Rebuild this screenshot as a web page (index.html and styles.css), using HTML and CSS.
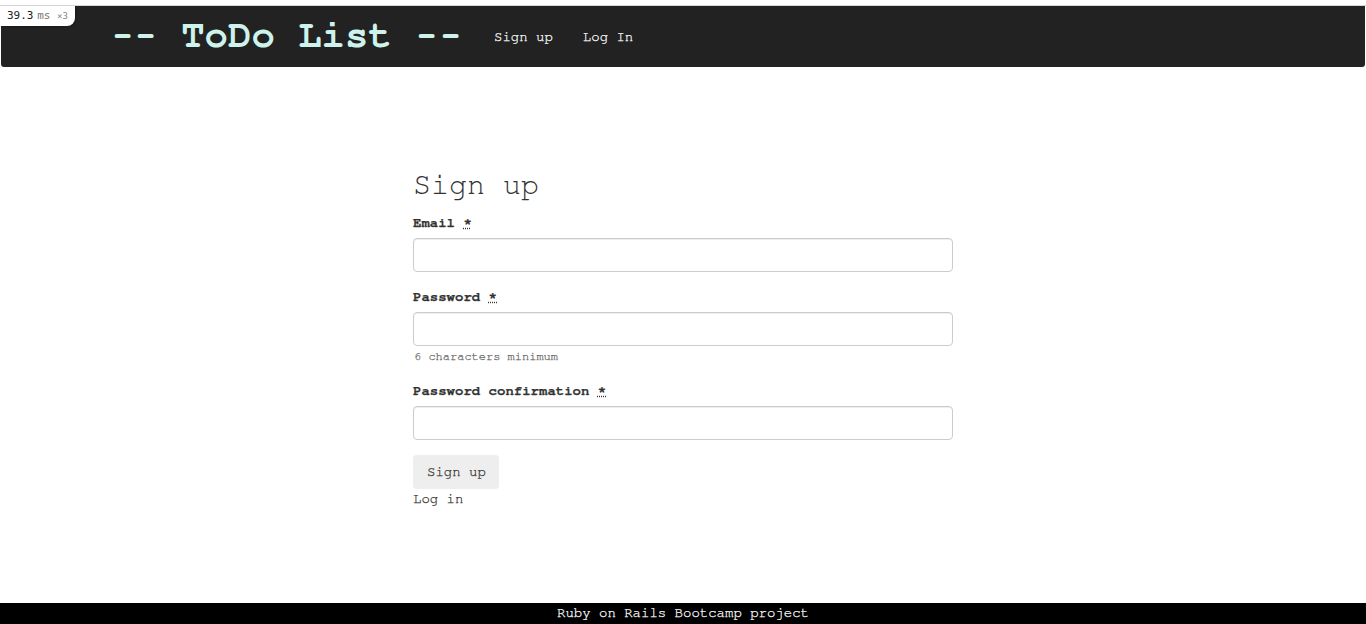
FILE: index.html
```html
<!DOCTYPE html>
<html lang="en">
<head>
    <meta charset="UTF-8">
    <meta name="viewport" content="width=device-width, initial-scale=1.0">
    <title>ToDo List</title>
    <link rel="stylesheet" href="styles.css">
</head>
<body>
    <div class="page">
        <div class="topline">
            <div class="profiler"><span class="ms-value">39.3</span> <span class="ms-unit">ms</span> <span class="ms-count">&times;3</span></div>
            <nav class="navbar">
                <a class="brand" href="#"><span class="dash">-</span><span class="dash">-</span> ToDo List <span class="dash">-</span><span class="dash">-</span></a>
                <a class="nav-link" href="#">Sign up</a>
                <a class="nav-link" href="#">Log In</a>
            </nav>
        </div>

        <main class="main">
            <form class="signup">
                <h2>Sign up</h2>

                <div class="field">
                    <label for="email">Email <abbr title="required">*</abbr></label>
                    <input type="email" id="email" name="email">
                </div>

                <div class="field">
                    <label for="password">Password <abbr title="required">*</abbr></label>
                    <input type="password" id="password" name="password">
                    <p class="hint">6 characters minimum</p>
                </div>

                <div class="field">
                    <label for="confirm">Password confirmation <abbr title="required">*</abbr></label>
                    <input type="password" id="confirm" name="confirm">
                </div>

                <button type="submit">Sign up</button>
                <a class="login" href="#">Log in</a>
            </form>
        </main>

        <footer class="footer">Ruby on Rails Bootcamp project</footer>
    </div>
</body>
</html>
```

FILE: styles.css
```css
* {
    box-sizing: border-box;
}
body {
    margin: 0;
    font-family: "Nimbus Mono PS", "Nimbus Mono L", "FreeMono", "Liberation Mono", "Courier New", monospace;
    font-size: 14px;
    line-height: 20px;
    color: #333;
    background-color: #fff;
    -webkit-text-stroke: 0.25px;
}
.page {
    min-height: 100vh;
    display: flex;
    flex-direction: column;
    padding-top: 5px;
}
.topline {
    position: relative;
    border-top: 1px solid #d6d6d6;
}
.profiler {
    position: absolute;
    top: 0;
    left: 0;
    width: 75px;
    height: 20px;
    padding: 3px 0 0 7px;
    background-color: #fff;
    border-bottom-right-radius: 8px;
    box-shadow: 1px 1px 2px rgba(0, 0, 0, 0.25);
    font-family: "DejaVu Sans Mono", monospace;
    font-size: 11px;
    line-height: 14px;
    color: #222;
    white-space: nowrap;
    -webkit-text-stroke: 0;
}
.ms-unit {
    color: #777;
    margin-left: -3px;
}
.ms-count {
    color: #888;
    font-size: 9px;
}
.navbar {
    height: 61px;
    margin: 0 1px;
    padding-left: 110px;
    display: flex;
    align-items: center;
    background-color: #222;
    border-radius: 0 0 3px 3px;
}
.brand {
    font-size: 39px;
    font-weight: bold;
    color: #cdf3ec;
    text-decoration: none;
    margin-right: 32px;
    margin-top: -2px;
    white-space: pre;
    -webkit-text-stroke: 0;
}
.dash {
    display: inline-block;
    transform: scaleX(0.78);
}
.nav-link {
    color: #fff;
    text-decoration: none;
    margin-right: 30px;
    margin-top: 1px;
}
.main {
    flex: 1;
    display: flex;
    justify-content: center;
}
.signup {
    width: 540px;
    margin-top: 83px;
    display: flex;
    flex-direction: column;
    align-items: flex-start;
}
h2 {
    font-size: 30px;
    font-weight: normal;
    line-height: 33px;
    margin: 19px 0 11px 0;
    -webkit-text-stroke: 0;
}
.field {
    width: 100%;
    margin-bottom: 15px;
}
label {
    display: block;
    font-weight: bold;
    margin-bottom: 5px;
}
abbr {
    text-decoration: underline dotted;
    border: none;
}
input {
    display: block;
    width: 100%;
    height: 34px;
    padding: 6px 12px;
    border: 1px solid #ccc;
    border-radius: 4px;
    font-family: inherit;
    font-size: 14px;
    box-shadow: inset 0 1px 1px rgba(0, 0, 0, 0.075);
}
.hint {
    margin: 2px 0 1px 1px;
    font-size: 12px;
    line-height: 17px;
    color: #666;
}
button {
    height: 34px;
    padding: 0 13px 0 14px;
    border: none;
    border-radius: 4px;
    background-color: #eee;
    color: #333;
    font-family: inherit;
    font-size: 14px;
    cursor: pointer;
    -webkit-text-stroke: 0.25px;
}
.login {
    color: #333;
    text-decoration: none;
}
.footer {
    height: 21px;
    background-color: #000;
    color: #fff;
    text-align: center;
    line-height: 21px;
}
```
